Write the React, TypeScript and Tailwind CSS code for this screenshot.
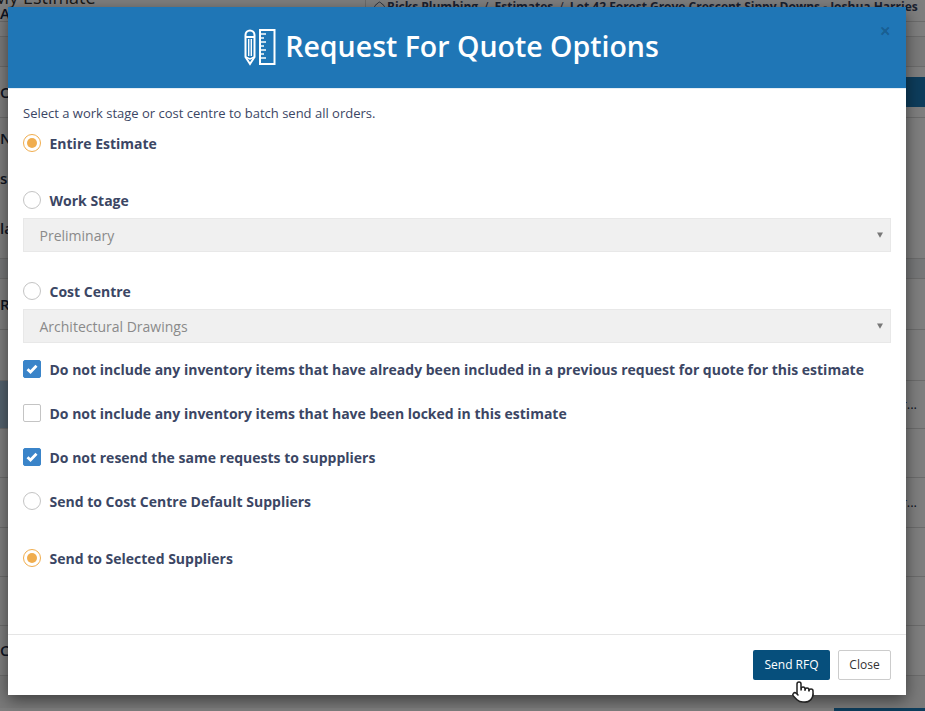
import { House, Pointer } from 'lucide-react';

const font = { fontFamily: '"Open Sans", "Liberation Sans", sans-serif' };

function Radio({ label, checked, className }: { label: string; checked?: boolean; className: string }) {
  return (
    <label className={`flex items-center gap-[8.5px] h-[18px] ${className}`}>
      <span
        className={`flex items-center justify-center w-[18px] h-[18px] rounded-full border bg-white ${
          checked ? 'border-[#f0ad4e]' : 'border-[#c4c4c4]'
        }`}
      >
        {checked && <span className="w-[10px] h-[10px] rounded-full bg-[#f0ad4e]" />}
      </span>
      <span className="text-[14px] font-bold text-[#3b4664] whitespace-nowrap">{label}</span>
    </label>
  );
}

function Check({ label, checked, className }: { label: string; checked?: boolean; className: string }) {
  return (
    <label className={`flex items-center gap-[8.5px] h-[18px] ${className}`}>
      <span
        className={`flex items-center justify-center w-[18px] h-[18px] rounded-[2px] border ${
          checked ? 'border-[#3a84c9] bg-[#3a84c9]' : 'border-[#c4c4c4] bg-white'
        }`}
      >
        {checked && (
          <svg viewBox="0 0 12 10" className="w-[12px] h-[10px]">
            <path d="M1.5 5.2 4.5 8 10.5 1.8" fill="none" stroke="#fff" strokeWidth="2.8" />
          </svg>
        )}
      </span>
      <span className="text-[14px] font-bold text-[#3b4664] whitespace-nowrap">{label}</span>
    </label>
  );
}

function StageSelect({ value, className }: { value: string; className: string }) {
  return (
    <div
      className={`flex items-center justify-between h-[34px] pl-[15.5px] pr-[7px] bg-[#f0f0f0] border border-[#e8e8e8] ${className}`}
    >
      <span className="text-[14px] text-[#8a8a8a]">{value}</span>
      <svg viewBox="0 0 8 7" className="w-[6px] h-[6px]">
        <path d="M0 0h8L4 7z" fill="#777" />
      </svg>
    </div>
  );
}

function TitleIcon() {
  return (
    <svg viewBox="0 0 32 37" className="w-[32px] h-[37px]" fill="none" stroke="#fff">
      <path d="M1.500 6a4.500 4.500 0 0 1 9 0v22L6 35 1.500 28z" strokeWidth="2" />
      <path d="M1.500 8h9" strokeWidth="2" />
      <path d="M4.700 10v17M7.300 10v17" strokeWidth="1.400" />
      <path d="M1.500 28 6 30l4.500-2" strokeWidth="1.400" />
      <rect x="16" y="1" width="14.500" height="34" strokeWidth="2" />
      <path
        d="M17 5h5M17 9h3M17 13h5M17 17h3M17 21h5M17 25h3M17 29h5"
        strokeWidth="1.600"
      />
    </svg>
  );
}

// what is left visible of the estimate page behind the dialog
const pageRows = [
  { h: 'h-[21px]', line: 'items-end', leftBg: '', rightBg: '', left: 'A', right: '' },
  { h: 'h-[15px]', line: 'border-t border-[#d8d8d8]', leftBg: '', rightBg: '', left: '', right: '' },
  { h: 'h-[30px]', line: 'border-t border-[#d8d8d8] bg-[#f4f4f4]', leftBg: '', rightBg: '', left: '', right: '' },
  { h: 'h-[11px]', line: 'border-t border-[#d8d8d8]', leftBg: '', rightBg: '', left: '', right: '' },
  { h: 'h-[30px]', line: '', leftBg: '', rightBg: 'bg-[#1a7bb8]', left: 'O', right: '' },
  { h: 'h-[10px]', line: '', leftBg: '', rightBg: '', left: '', right: '' },
  { h: 'h-[41px]', line: 'border-t border-[#d8d8d8]', leftBg: '', rightBg: '', left: 'N', right: '' },
  { h: 'h-[40px]', line: '', leftBg: '', rightBg: '', left: 's', right: '' },
  { h: 'h-[60px]', line: '', leftBg: '', rightBg: '', left: 'la', right: '' },
  { h: 'h-[21px]', line: 'bg-[#eef0f2] border-y border-[#d8d8d8]', leftBg: '', rightBg: '', left: '', right: '' },
  { h: 'h-[50px]', line: '', leftBg: '', rightBg: '', left: 'R', right: '' },
  { h: 'h-[51px]', line: 'border-t border-[#d8d8d8]', leftBg: '', rightBg: '', left: '', right: '' },
  { h: 'h-[48px]', line: 'border-t border-[#d8d8d8]', leftBg: 'bg-[#a9c4dc]', rightBg: '', left: '', right: 'r...' },
  { h: 'h-[49px]', line: 'border-t border-[#d8d8d8]', leftBg: '', rightBg: '', left: '', right: '' },
  { h: 'h-[50px]', line: 'border-t border-[#d8d8d8]', leftBg: '', rightBg: '', left: '', right: 'r...' },
  { h: 'h-[49px]', line: 'border-t border-[#d8d8d8]', leftBg: '', rightBg: '', left: '', right: '' },
  { h: 'h-[49px]', line: 'border-t border-[#d8d8d8]', leftBg: '', rightBg: '', left: '', right: '' },
  { h: 'h-[50px]', line: 'border-t border-[#d8d8d8]', leftBg: '', rightBg: '', left: 'C', right: '' },
  { h: 'h-[33px]', line: 'border-t border-[#d8d8d8] bg-[#f4f4f4]', leftBg: '', rightBg: '', left: '', right: '' },
];

export default function App() {
  return (
    <div className="relative h-[711px] overflow-hidden bg-white" style={font}>
      <div className="flex flex-col">
        {pageRows.map((row, i) => (
          <div key={i} className={`grid grid-cols-2 shrink-0 ${row.h} ${row.line}`}>
            <div className={`flex items-center ${row.leftBg}`}>
              <span className="text-[15px] font-semibold text-[#1c2b44] leading-none">{row.left}</span>
            </div>
            <div className={`flex items-center justify-end ${row.rightBg}`}>
              <span className="text-[13px] text-[#1c2b44] leading-none mr-[8px]">{row.right}</span>
            </div>
          </div>
        ))}
        <div className="flex justify-end">
          <div className="w-[91px] h-[3px] bg-[#1a7bb8]" />
        </div>
      </div>

      <div className="absolute top-[-12px] left-[-7px] text-[18px] leading-[18px] text-[#333] whitespace-nowrap">
        My Estimate
      </div>
      <div className="absolute top-[-2px] left-[365px] flex items-center gap-[6px] pl-[7px] border-l border-[#d8d8d8] text-[12px] font-bold text-[#33415f] whitespace-nowrap">
        <span className="flex items-center gap-[1px]">
          <House className="w-[13px] h-[13px]" strokeWidth={1.5} />
          Ricks Plumbing
        </span>
        <span className="font-normal">/</span>
        <span>Estimates</span>
        <span className="font-normal">/</span>
        <span>Lot 42 Forest Grove Crescent Sippy Downs - Joshua Harries</span>
      </div>

      <div className="absolute inset-0 bg-black/50" />

      <div className="absolute left-[8px] top-[7px] w-[898px] h-[688px] flex flex-col bg-white shadow-[0_5px_15px_rgba(0,0,0,0.5)]">
        <div className="relative flex items-center justify-center gap-[9px] h-[82px] shrink-0 pr-[11px] bg-[#1f76b6] border-b border-[#e5eef5]">
          <TitleIcon />
          <h1 className="text-[28.5px] leading-none font-semibold text-white whitespace-nowrap -mt-[2px]">
            Request For Quote Options
          </h1>
          <span className="absolute right-[15px] top-[14px] text-[20px] leading-[20px] font-bold text-black/20">×</span>
        </div>

        <div className="flex flex-col flex-1 px-[15px]">
          <p className="mt-[15px] text-[13px] leading-[18px] text-[#3b4664]">
            Select a work stage or cost centre to batch send all orders.
          </p>
          <Radio label="Entire Estimate" checked className="mt-[12px]" />
          <Radio label="Work Stage" className="mt-[39px]" />
          <StageSelect value="Preliminary" className="mt-[9px]" />
          <Radio label="Cost Centre" className="mt-[30px]" />
          <StageSelect value="Architectural Drawings" className="mt-[9px]" />
          <Check
            label="Do not include any inventory items that have already been included in a previous request for quote for this estimate"
            checked
            className="mt-[17px]"
          />
          <Check
            label="Do not include any inventory items that have been locked in this estimate"
            className="mt-[26px]"
          />
          <Check label="Do not resend the same requests to supppliers" checked className="mt-[26px]" />
          <Radio label="Send to Cost Centre Default Suppliers" className="mt-[26px]" />
          <Radio label="Send to Selected Suppliers" checked className="mt-[39px]" />
        </div>

        <div className="flex justify-end items-center gap-[8px] h-[61px] shrink-0 px-[15px] border-t border-[#e5e5e5]">
          <button className="h-[30px] w-[77px] rounded-[2px] bg-[#064f7c] text-[12px] text-white">Send RFQ</button>
          <button className="h-[30px] w-[53px] rounded-[2px] border border-[#ccc] bg-white text-[12px] text-[#333]">
            Close
          </button>
        </div>
      </div>

      <Pointer className="absolute left-[791px] top-[680px] w-[24px] h-[24px] fill-white text-[#222]" strokeWidth={1.5} />
    </div>
  );
}
